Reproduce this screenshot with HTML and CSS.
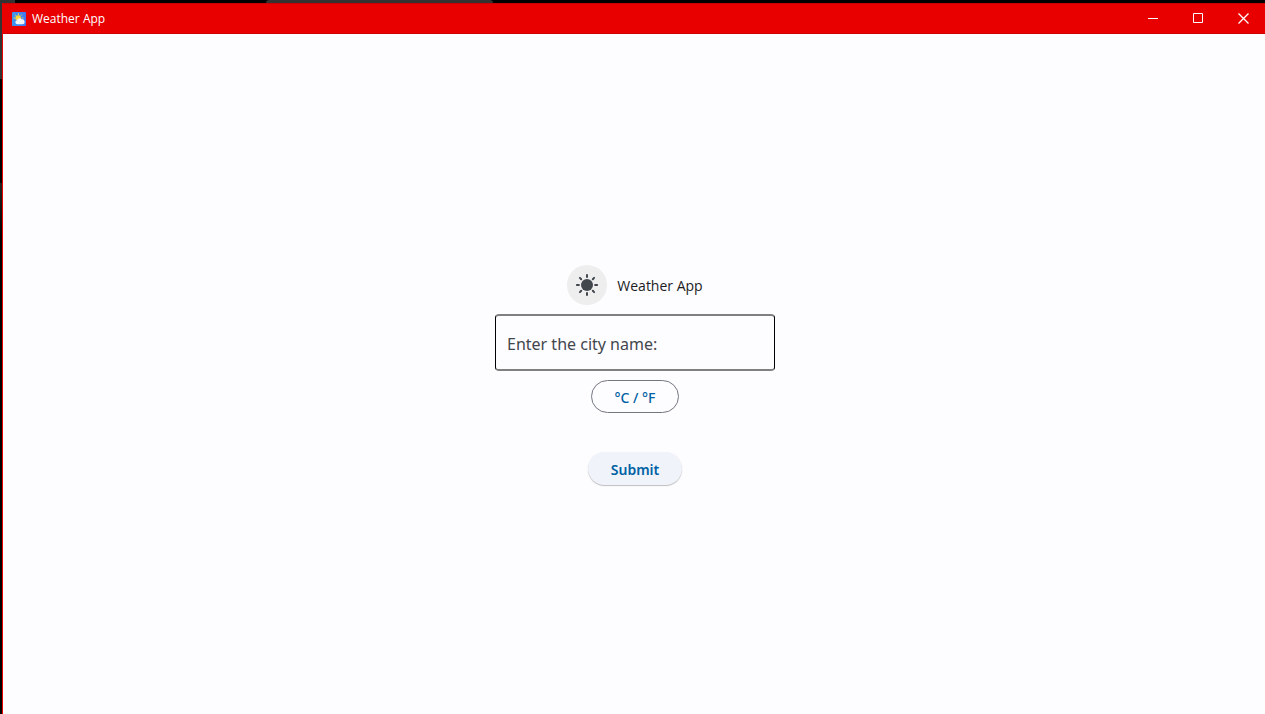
FILE: index.html
```html
<!DOCTYPE html>
<html lang="en">
<head>
<meta charset="utf-8">
<title>Weather App</title>
<link rel="stylesheet" href="styles.css">
</head>
<body>
<div class="desktop">
  <span class="desktop-corner"></span>
  <span class="desktop-tab"></span>
  <div class="window">
    <header class="titlebar">
      <svg class="app-icon" viewBox="0 0 14 14" aria-hidden="true">
        <defs><linearGradient id="sky" x1="0" y1="0" x2="1" y2="0"><stop offset="0" stop-color="#3a97ee"/><stop offset="1" stop-color="#3f78f2"/></linearGradient></defs>
        <rect width="14" height="14" rx="1" fill="url(#sky)"/>
        <g stroke="#f3d24a" stroke-width="1" stroke-linecap="round"><path d="M6.5 1.6v1M3.3 2.8l.6.7M9.7 2.8l-.6.7M2 6h1M10.2 6h.8"/></g>
        <circle cx="6.2" cy="6" r="2.8" fill="#fad53c"/>
        <path d="M5.6 12.2a2 2 0 0 1-.5-4A2.7 2.7 0 0 1 9.8 7.2 2.5 2.5 0 0 1 10.4 12.2z" fill="#f2f4f6"/>
      </svg>
      <span class="titlebar-text">Weather App</span>
      <div class="window-controls">
        <button class="control" aria-label="Minimize"><svg viewBox="0 0 12 12"><path d="M1 5.5h10"/></svg></button>
        <button class="control" aria-label="Maximize"><svg viewBox="0 0 12 12"><path d="M1.5.5h9v9h-9z"/></svg></button>
        <button class="control" aria-label="Close"><svg viewBox="0 0 12 12"><path d="M1.5.5l10 10M11.5.5l-10 10" stroke-width="1.3"/></svg></button>
      </div>
    </header>
    <main class="content">
      <div class="heading">
        <button class="theme-button" aria-label="Toggle theme">
          <svg viewBox="0 0 24 24">
            <circle cx="12" cy="12" r="6" fill="#42474e"/>
            <path d="M12 1.9v2M12 20.1v2M1.9 12h2M20.1 12h2M4.9 4.9l1.3 1.3M17.8 17.8l1.3 1.3M4.9 19.1l1.3-1.3M17.8 6.2l1.3-1.3" stroke="#42474e" stroke-width="2" stroke-linecap="round"/>
          </svg>
        </button>
        <span class="heading-text">Weather App</span>
      </div>
      <input class="city-input" type="text" placeholder="Enter the city name:" aria-label="Enter the city name:">
      <button class="pill unit-button">°C / °F</button>
      <button class="pill submit-button">Submit</button>
    </main>
  </div>
</div>
</body>
</html>
```
FILE: styles.css
```css
* {
  box-sizing: border-box;
}

body {
  margin: 0;
  font-family: "Noto Sans", "Open Sans", sans-serif;
}

button {
  border: 0;
  padding: 0;
  font-family: inherit;
}

.desktop {
  position: relative;
  display: flex;
  min-height: 100vh;
  padding: 3px 0 0 2px;
  background: linear-gradient(#333 0, #333 79px, #000 79px, #000 183px, #222 183px, #000 240px);
}

.desktop::before {
  content: "";
  position: absolute;
  top: 0;
  left: 0;
  right: 0;
  height: 3px;
  background: #000;
}

.desktop-corner,
.desktop-tab {
  position: absolute;
  top: 0;
  height: 3px;
  background: #333;
}

.desktop-corner {
  left: 0;
  width: 15px;
}

.desktop-tab {
  left: 21%;
  width: 18%;
  border-radius: 3px 3px 0 0;
}

.window {
  position: relative;
  flex: 1;
  display: flex;
  flex-direction: column;
  border-left: 1px solid #e80000;
  background: #fdfcff;
}

.titlebar {
  display: flex;
  align-items: center;
  height: 31px;
  padding-left: 9px;
  gap: 6px;
  background: #e80000;
  border-top: 1px solid #cc0000;
  border-bottom: 1px solid #d00000;
  color: #fff;
}

.app-icon {
  width: 14px;
  height: 14px;
}

.titlebar-text {
  font-family: "Open Sans", "Noto Sans", sans-serif;
  font-size: 12px;
  line-height: 16px;
}

.window-controls {
  display: flex;
  margin-left: auto;
  align-self: stretch;
}

.control {
  display: flex;
  align-items: center;
  justify-content: center;
  width: 45px;
  background: transparent;
}

.control svg {
  width: 12px;
  height: 12px;
  fill: none;
  stroke: #fff;
  stroke-width: 1;
}

.content {
  flex: 1;
  display: flex;
  flex-direction: column;
  align-items: center;
  justify-content: center;
  gap: 9px;
  padding: 2px 0 0 2px;
}

.heading {
  display: flex;
  align-items: center;
  gap: 10px;
}

.theme-button {
  display: flex;
  align-items: center;
  justify-content: center;
  width: 40px;
  height: 40px;
  border-radius: 50%;
  background: #eeeeef;
}

.theme-button svg {
  width: 24px;
  height: 24px;
}

.heading-text {
  padding-top: 2px;
  font-family: "Open Sans", "Noto Sans", sans-serif;
  font-size: 14px;
  line-height: 20px;
  color: #1a1c1e;
}

.city-input {
  width: 280px;
  height: 57px;
  padding: 2px 11px 0;
  border: solid;
  border-width: 2px 1px;
  border-color: #808080 #000;
  border-radius: 4px;
  background: transparent;
  font-family: inherit;
  font-size: 16px;
  color: #1a1c1e;
}

.city-input::placeholder {
  color: #42474e;
  opacity: 1;
}

.pill {
  height: 33px;
  padding: 2px 23px 0;
  border-radius: 17px;
  font-size: 14px;
  font-weight: 500;
  line-height: 20px;
  color: #0061a4;
}

.unit-button {
  border: 1px solid #73777f;
  background: transparent;
}

.submit-button {
  margin-top: 30px;
  background: #f0f3fa;
  box-shadow: 0 1px 1px rgba(0, 0, 0, 0.25);
  font-weight: 600;
}
```
